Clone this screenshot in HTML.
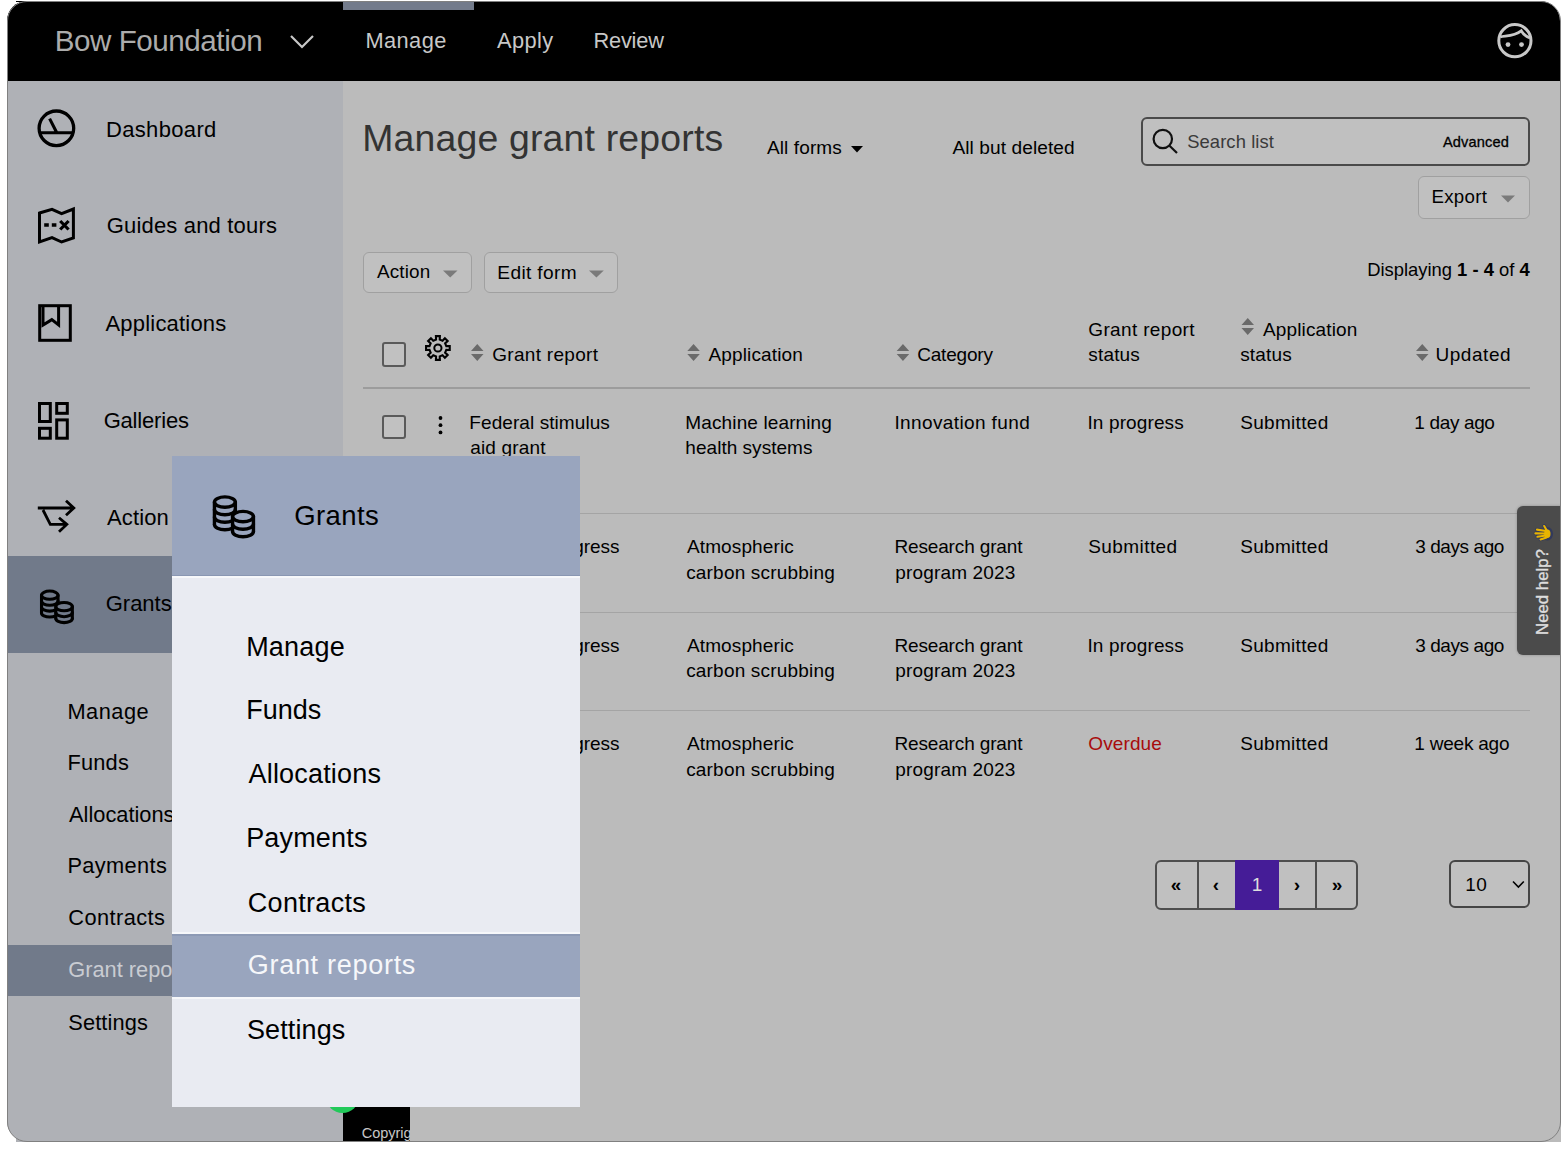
<!DOCTYPE html>
<html><head><meta charset="utf-8">
<style>
html,body{margin:0;padding:0;width:1564px;height:1149px;overflow:hidden;background:#fff;}
body{font-family:"Liberation Sans", sans-serif;position:relative;}
.t{position:absolute;white-space:nowrap;line-height:1;}
.r{position:absolute;}
#clip{position:absolute;left:0;top:0;width:1564px;height:1149px;clip-path:inset(1px 4px 8px 7px round 20px);background:#bbbbbb;}
svg{position:absolute;overflow:visible;}
</style></head><body>
<div id="clip">
<div class="r" style="left:0px;top:0px;width:1564px;height:81px;background:#000;"></div>
<div class="r" style="left:343px;top:2px;width:131px;height:8px;background:#737b8b;"></div>
<div class="t" style="left:54.76px;top:25.84px;font-size:29.6px;color:#acacac;letter-spacing:-0.454px;">Bow Foundation</div>
<svg style="left:0;top:0" width="1564" height="80"><path d="M291,36 L302,47 L313,36" fill="none" stroke="#c8c8c8" stroke-width="2.2"/><circle cx="1514.9" cy="40.7" r="16.1" fill="none" stroke="#c8c8c8" stroke-width="3"/><path d="M1500.2,36.8 C1506,35.5 1514,36.5 1521.2,30.8 C1523,34 1526,36.5 1530,38" fill="none" stroke="#c8c8c8" stroke-width="2.8"/><circle cx="1508" cy="44.6" r="2.4" fill="#c8c8c8"/><circle cx="1521.5" cy="44.6" r="2.4" fill="#c8c8c8"/></svg>
<div class="t" style="left:365.44px;top:29.95px;font-size:21.8px;color:#c8c8c8;letter-spacing:0.427px;">Manage</div>
<div class="t" style="left:497.00px;top:29.95px;font-size:21.8px;color:#c8c8c8;letter-spacing:0.375px;">Apply</div>
<div class="t" style="left:593.40px;top:29.95px;font-size:21.8px;color:#c8c8c8;letter-spacing:-0.181px;">Review</div>
<div class="r" style="left:0px;top:81px;width:343px;height:1068px;background:#afb1b6;"></div>
<div class="r" style="left:0px;top:556px;width:343px;height:97px;background:#717a8a;"></div>
<div class="r" style="left:0px;top:944.5px;width:343px;height:51.10000000000002px;background:#717a8a;"></div>
<div class="t" style="left:105.94px;top:118.78px;font-size:22px;color:#000;letter-spacing:0.347px;">Dashboard</div>
<div class="t" style="left:106.74px;top:215.08px;font-size:22px;color:#000;letter-spacing:0.174px;">Guides and tours</div>
<div class="t" style="left:105.50px;top:313.08px;font-size:22px;color:#000;letter-spacing:0.198px;">Applications</div>
<div class="t" style="left:103.66px;top:410.18px;font-size:22px;color:#000;letter-spacing:-0.191px;">Galleries</div>
<div class="t" style="left:107.00px;top:507.28px;font-size:22px;color:#000;letter-spacing:0.128px;">Action</div>
<div class="t" style="left:105.70px;top:593.08px;font-size:22px;color:#000;">Grants</div>
<div class="t" style="left:67.48px;top:700.75px;font-size:21.8px;color:#000;letter-spacing:0.495px;">Manage</div>
<div class="t" style="left:67.48px;top:752.45px;font-size:21.8px;color:#000;letter-spacing:0.199px;">Funds</div>
<div class="t" style="left:69.08px;top:804.15px;font-size:21.8px;color:#000;">Allocations</div>
<div class="t" style="left:67.48px;top:854.95px;font-size:21.8px;color:#000;letter-spacing:0.346px;">Payments</div>
<div class="t" style="left:68.28px;top:906.55px;font-size:21.8px;color:#000;letter-spacing:0.412px;">Contracts</div>
<div class="t" style="left:68.28px;top:959.35px;font-size:21.8px;color:#c9ccd2;">Grant reports</div>
<div class="t" style="left:68.28px;top:1011.55px;font-size:21.8px;color:#000;letter-spacing:0.125px;">Settings</div>
<svg style="left:0;top:0" width="343" height="700" fill="none" stroke="#000" stroke-width="3"><circle cx="56.4" cy="128.3" r="17.3" stroke-width="3.3"/><path d="M39.5,132.7 H73.3 M49.6,118.6 L56.8,132.7" stroke-width="3.1"/><path d="M39.5,213 L52,209.3 L61.6,213.6 L73.4,209 V238 L61.6,242 L52,237.6 L39.5,241.8 Z" stroke-linejoin="miter" stroke-width="3"/><path d="M44.2,225 H48.8 M51.8,225 H56.4" stroke-width="3.4"/><path d="M60.2,221 L68.6,229.5 M68.6,221 L60.2,229.5" stroke-width="3.2"/><rect x="39.7" y="305.7" width="30.6" height="34.6"/><path d="M43,307 V325 L51.8,319.6 L58.6,325 V307" stroke-width="3"/><rect x="39.5" y="403.5" width="10.8" height="18" /><rect x="56.7" y="403.5" width="10.6" height="9.8" /><rect x="39.5" y="428.3" width="10.8" height="9.9" /><rect x="56.7" y="419.9" width="10.6" height="18.3" /><path d="M37.8,508 H73 M66,500.7 L73.8,508 L66,515.3 M43,510 L50.3,524.4 H66.5 M59,517.8 L66.8,524.4 L59,531.8" stroke-width="2.8"/></svg>
<svg style="left:37.87px;top:587.76px" width="48" height="48"><g transform="scale(0.79)" fill="none" stroke="#000" stroke-width="3.9" stroke-linecap="round"><path d="M4.45,9.10 V31.60 A10.45,5.2 0 0 0 25.35,31.60 V9.10 Z" fill="#717a8a" stroke="none"/><ellipse cx="14.90" cy="9.10" rx="10.45" ry="5.2" fill="#717a8a"/><path d="M4.45,9.10 V31.60 M25.35,9.10 V31.60"/><path d="M4.45,16.60 A10.45,5.2 0 0 0 25.35,16.60"/><path d="M4.45,24.10 A10.45,5.2 0 0 0 25.35,24.10"/><path d="M4.45,31.60 A10.45,5.2 0 0 0 25.35,31.60"/><path d="M22.55,23.60 V38.60 A10.45,5.2 0 0 0 43.45,38.60 V23.60 Z" fill="#717a8a" stroke="none"/><ellipse cx="33.00" cy="23.60" rx="10.45" ry="5.2" fill="#717a8a"/><path d="M22.55,23.60 V38.60 M43.45,23.60 V38.60"/><path d="M22.55,31.10 A10.45,5.2 0 0 0 43.45,31.10"/><path d="M22.55,38.60 A10.45,5.2 0 0 0 43.45,38.60"/></g></svg>
<div class="t" style="left:362.14px;top:120.14px;font-size:37.4px;color:#333;letter-spacing:0.188px;">Manage grant reports</div>
<div class="t" style="left:767.00px;top:138.42px;font-size:19px;color:#000;letter-spacing:0.111px;">All forms</div>
<svg style="left:0;top:0" width="1564" height="300"><path d="M851,146 H863 L857,152.5 Z" fill="#000"/></svg>
<div class="t" style="left:952.46px;top:138.33px;font-size:19.1px;color:#000;letter-spacing:0.083px;">All but deleted</div>
<div class="r" style="box-sizing:border-box;left:1141px;top:117px;width:389px;height:49px;border:2px solid #4a4a4a;border-radius:6px;background:#c0c0c0;"></div>
<svg style="left:0;top:0" width="1564" height="300" fill="none" stroke="#111" stroke-width="2.2"><circle cx="1162.8" cy="139" r="9.2"/><path d="M1169.5,145.7 L1177,153"/></svg>
<div class="t" style="left:1187.16px;top:133.22px;font-size:18.4px;color:#3a3a3a;letter-spacing:0.091px;">Search list</div>
<div class="t" style="left:1443.00px;top:135.14px;font-size:14.6px;color:#000;letter-spacing:0.119px;-webkit-text-stroke:0.3px #000;">Advanced</div>
<div class="r" style="box-sizing:border-box;left:1418px;top:176px;width:112px;height:42.5px;border:1px solid #a0a0a0;border-radius:6px;background:#c0c0c0;"></div>
<div class="t" style="left:1431.40px;top:187.87px;font-size:18.7px;color:#000;letter-spacing:0.311px;">Export</div>
<div class="r" style="box-sizing:border-box;left:363px;top:251.6px;width:109px;height:41.8px;border:1px solid #a0a0a0;border-radius:6px;background:#c0c0c0;"></div>
<div class="r" style="box-sizing:border-box;left:484.3px;top:251.6px;width:134px;height:41.8px;border:1px solid #a0a0a0;border-radius:6px;background:#c0c0c0;"></div>
<svg style="left:0;top:0" width="1564" height="300"><path d="M1501,195.5 H1515 L1508,202.6 Z" fill="#7a7a7a"/><path d="M443,270.5 H457.5 L450.2,277.6 Z" fill="#7a7a7a"/><path d="M589,270.5 H603.8 L596.4,277.6 Z" fill="#7a7a7a"/></svg>
<div class="t" style="left:376.96px;top:263.00px;font-size:18.9px;color:#000;letter-spacing:0.152px;">Action</div>
<div class="t" style="left:497.36px;top:262.83px;font-size:19.1px;color:#000;letter-spacing:0.360px;">Edit form</div>
<div class="t" style="right:34.30px;top:260.92px;font-size:18.4px;color:#000;">Displaying <b>1 - 4</b> of <b>4</b></div>
<svg style="left:0;top:0" width="1564" height="1149"><path d="M471,351 L477.25,344 L483.5,351 Z M471,354 L477.25,361 L483.5,354 Z" fill="#6a6a6a"/><path d="M687.3,351 L693.55,344 L699.8,351 Z M687.3,354 L693.55,361 L699.8,354 Z" fill="#6a6a6a"/><path d="M896.7,351 L902.95,344 L909.2,351 Z M896.7,354 L902.95,361 L909.2,354 Z" fill="#6a6a6a"/><path d="M1241.5,325 L1247.75,318 L1254.0,325 Z M1241.5,328 L1247.75,335 L1254.0,328 Z" fill="#6a6a6a"/><path d="M1416,351 L1422.25,344 L1428.5,351 Z M1416,354 L1422.25,361 L1428.5,354 Z" fill="#6a6a6a"/><path d="M436.06,339.60 L435.93,336.16 L439.87,336.16 L439.74,339.60 L442.54,340.76 L444.88,338.24 L447.66,341.02 L445.14,343.36 L446.30,346.16 L449.74,346.03 L449.74,349.97 L446.30,349.84 L445.14,352.64 L447.66,354.98 L444.88,357.76 L442.54,355.24 L439.74,356.40 L439.87,359.84 L435.93,359.84 L436.06,356.40 L433.26,355.24 L430.92,357.76 L428.14,354.98 L430.66,352.64 L429.50,349.84 L426.06,349.97 L426.06,346.03 L429.50,346.16 L430.66,343.36 L428.14,341.02 L430.92,338.24 L433.26,340.76Z" fill="none" stroke="#000" stroke-width="2.1" stroke-linejoin="miter"/><circle cx="437.9" cy="348" r="3.6" fill="none" stroke="#000" stroke-width="2"/><circle cx="440.5" cy="418" r="1.9" fill="#000"/><circle cx="440.5" cy="425.2" r="1.9" fill="#000"/><circle cx="440.5" cy="432.4" r="1.9" fill="#000"/></svg>
<div class="r" style="box-sizing:border-box;left:382px;top:342px;width:24px;height:24.5px;border:2px solid #5a5a5a;border-radius:3px;background:#c1c1c1"></div>
<div class="r" style="box-sizing:border-box;left:382px;top:415px;width:24px;height:24px;border:2px solid #5a5a5a;border-radius:3px;background:#c1c1c1"></div>
<div class="t" style="left:492.16px;top:345.22px;font-size:19px;color:#000;letter-spacing:0.312px;">Grant report</div>
<div class="t" style="left:708.54px;top:344.92px;font-size:19px;color:#000;letter-spacing:0.139px;">Application</div>
<div class="t" style="left:917.24px;top:344.92px;font-size:19px;color:#000;letter-spacing:-0.203px;">Category</div>
<div class="t" style="left:1088.28px;top:319.82px;font-size:19px;color:#000;letter-spacing:0.350px;">Grant report</div>
<div class="t" style="left:1088.28px;top:345.42px;font-size:19px;color:#000;letter-spacing:0.174px;">status</div>
<div class="t" style="left:1263.00px;top:319.82px;font-size:19px;color:#000;letter-spacing:0.139px;">Application</div>
<div class="t" style="left:1240.20px;top:345.42px;font-size:19px;color:#000;letter-spacing:0.174px;">status</div>
<div class="t" style="left:1435.40px;top:345.42px;font-size:19px;color:#000;letter-spacing:0.577px;">Updated</div>
<div class="r" style="left:363px;top:387px;width:1167px;height:2px;background:#9c9c9c;"></div>
<div class="r" style="left:363px;top:513px;width:1167px;height:1px;background:#a4a4a4;"></div>
<div class="r" style="left:363px;top:612px;width:1167px;height:1px;background:#a4a4a4;"></div>
<div class="r" style="left:363px;top:710px;width:1167px;height:1px;background:#a4a4a4;"></div>
<div class="t" style="left:469.36px;top:412.92px;font-size:19px;color:#000;letter-spacing:0.072px;">Federal stimulus</div>
<div class="t" style="left:470.16px;top:438.42px;font-size:19px;color:#000;letter-spacing:0.174px;">aid grant</div>
<div class="t" style="left:685.36px;top:412.92px;font-size:19px;color:#000;letter-spacing:0.120px;">Machine learning</div>
<div class="t" style="left:685.36px;top:438.42px;font-size:19px;color:#000;letter-spacing:0.025px;">health systems</div>
<div class="t" style="left:894.40px;top:412.92px;font-size:19px;color:#000;letter-spacing:0.386px;">Innovation fund</div>
<div class="t" style="left:1087.48px;top:412.92px;font-size:19px;color:#000;letter-spacing:0.122px;">In progress</div>
<div class="t" style="left:1240.20px;top:412.92px;font-size:19px;color:#000;letter-spacing:0.313px;">Submitted</div>
<div class="t" style="left:1414.36px;top:412.92px;font-size:19px;color:#000;letter-spacing:-0.363px;">1 day ago</div>
<div class="t" style="right:944.40px;top:537.22px;font-size:19px;color:#000;">Quarterly progress</div>
<div class="t" style="left:686.96px;top:537.22px;font-size:19px;color:#000;letter-spacing:0.124px;">Atmospheric</div>
<div class="t" style="left:686.16px;top:562.72px;font-size:19px;color:#000;letter-spacing:0.191px;">carbon scrubbing</div>
<div class="t" style="left:894.40px;top:537.22px;font-size:19px;color:#000;letter-spacing:-0.139px;">Research grant</div>
<div class="t" style="left:895.20px;top:562.72px;font-size:19px;color:#000;letter-spacing:0.173px;">program 2023</div>
<div class="t" style="left:1088.28px;top:537.22px;font-size:19px;color:#000;letter-spacing:0.413px;">Submitted</div>
<div class="t" style="left:1240.20px;top:537.22px;font-size:19px;color:#000;letter-spacing:0.313px;">Submitted</div>
<div class="t" style="left:1415.16px;top:537.22px;font-size:19px;color:#000;letter-spacing:-0.412px;">3 days ago</div>
<div class="t" style="right:944.40px;top:635.52px;font-size:19px;color:#000;">Quarterly progress</div>
<div class="t" style="left:686.96px;top:635.52px;font-size:19px;color:#000;letter-spacing:0.124px;">Atmospheric</div>
<div class="t" style="left:686.16px;top:661.02px;font-size:19px;color:#000;letter-spacing:0.191px;">carbon scrubbing</div>
<div class="t" style="left:894.40px;top:635.52px;font-size:19px;color:#000;letter-spacing:-0.139px;">Research grant</div>
<div class="t" style="left:895.20px;top:661.02px;font-size:19px;color:#000;letter-spacing:0.173px;">program 2023</div>
<div class="t" style="left:1087.48px;top:635.52px;font-size:19px;color:#000;letter-spacing:0.122px;">In progress</div>
<div class="t" style="left:1240.20px;top:635.52px;font-size:19px;color:#000;letter-spacing:0.313px;">Submitted</div>
<div class="t" style="left:1415.16px;top:635.52px;font-size:19px;color:#000;letter-spacing:-0.412px;">3 days ago</div>
<div class="t" style="right:944.40px;top:734.22px;font-size:19px;color:#000;">Quarterly progress</div>
<div class="t" style="left:686.96px;top:734.22px;font-size:19px;color:#000;letter-spacing:0.124px;">Atmospheric</div>
<div class="t" style="left:686.16px;top:759.72px;font-size:19px;color:#000;letter-spacing:0.191px;">carbon scrubbing</div>
<div class="t" style="left:894.40px;top:734.22px;font-size:19px;color:#000;letter-spacing:-0.139px;">Research grant</div>
<div class="t" style="left:895.20px;top:759.72px;font-size:19px;color:#000;letter-spacing:0.173px;">program 2023</div>
<div class="t" style="left:1088.28px;top:734.22px;font-size:19px;color:#a80c0c;letter-spacing:0.122px;">Overdue</div>
<div class="t" style="left:1240.20px;top:734.22px;font-size:19px;color:#000;letter-spacing:0.313px;">Submitted</div>
<div class="t" style="left:1414.36px;top:734.22px;font-size:19px;color:#000;letter-spacing:-0.232px;">1 week ago</div>
<div class="r" style="box-sizing:border-box;left:1155px;top:860px;width:203px;height:49.5px;border:2px solid #4e4e4e;border-radius:6px;background:#c0c0c0;"></div>
<div class="r" style="left:1235px;top:860px;width:44px;height:49.5px;background:#451c97;"></div>
<div class="r" style="left:1197px;top:861px;width:1.5px;height:47.5px;background:#4e4e4e;"></div>
<div class="r" style="left:1315px;top:861px;width:1.5px;height:47.5px;background:#4e4e4e;"></div>
<div style="position:absolute;top:870px;text-align:center;font-size:19px;line-height:30px;white-space:nowrap;left:1155px;width:42px;color:#000;font-weight:bold">&laquo;</div>
<div style="position:absolute;top:870px;text-align:center;font-size:19px;line-height:30px;white-space:nowrap;left:1197px;width:38px;color:#000;font-weight:bold">&lsaquo;</div>
<div style="position:absolute;top:870px;text-align:center;font-size:19px;line-height:30px;white-space:nowrap;left:1235px;width:44px;color:#ddd">1</div>
<div style="position:absolute;top:870px;text-align:center;font-size:19px;line-height:30px;white-space:nowrap;left:1278px;width:38px;color:#000;font-weight:bold">&rsaquo;</div>
<div style="position:absolute;top:870px;text-align:center;font-size:19px;line-height:30px;white-space:nowrap;left:1316px;width:42px;color:#000;font-weight:bold">&raquo;</div>
<div class="r" style="box-sizing:border-box;left:1449px;top:860px;width:81px;height:48px;border:2px solid #454545;border-radius:6px;background:#c0c0c0;"></div>
<div class="t" style="left:1465.36px;top:875.22px;font-size:19px;color:#000;letter-spacing:0.350px;">10</div>
<svg style="left:0;top:0" width="1564" height="1149"><path d="M1513,881.5 L1518.4,887 L1523.8,881.5" fill="none" stroke="#000" stroke-width="1.6"/></svg>
<div class="r" style="left:1517px;top:506px;width:60px;height:149px;background:#4b4b4b;border-radius:6px;box-shadow:0 0 3px rgba(0,0,0,0.25)"></div>
<div class="t" style="left:1543px;top:592px;font-size:16.8px;line-height:1;color:#ddd;-webkit-text-stroke:0.35px #ddd;transform:translate(-50%,-50%) rotate(-90deg);">Need help?</div>
<svg style="left:0;top:0" width="1564" height="1149"><g stroke-linecap="round" fill="none"><g stroke="#1d2c6b" stroke-width="3.6" opacity="0.55"><path d="M1546,531 L1537,529.6 M1546,533.5 L1535.4,533.4 M1546,535.5 L1537.4,536.8 M1546.5,537.5 L1540.5,539.4 M1546.8,530.5 L1544.2,526"/><ellipse cx="1547.3" cy="533.8" rx="4" ry="5" fill="#1d2c6b"/></g><g stroke="#e8b400" stroke-width="2.1"><path d="M1546,531 L1537,529.6 M1546,533.5 L1535.4,533.4 M1546,535.5 L1537.4,536.8 M1546.5,537.5 L1540.5,539.4 M1546.8,530.5 L1544.2,526"/><ellipse cx="1547.3" cy="533.8" rx="3.2" ry="4.3" fill="#e8b400" stroke="none"/></g></g></svg>
<div class="r" style="left:343px;top:1107px;width:67px;height:42px;background:#000;"></div>
<div class="t" style="left:361.70px;top:1126.33px;font-size:14.5px;color:#c8c8c8;">Copyright</div>
<div class="r" style="left:410px;top:1107px;width:1154px;height:42px;background:#bbbbbb;"></div>
<div class="r" style="left:325.75px;top:1079.9px;width:33.1px;height:33.1px;border-radius:50%;background:#22c95a"></div>
<div class="r" style="left:172px;top:456px;width:408px;height:119px;background:#99a5be;"></div>
<div class="r" style="left:172px;top:575px;width:408px;height:1px;background:#8996b2;"></div>
<div class="r" style="left:172px;top:576px;width:408px;height:2px;background:#f6f7fa;"></div>
<div class="r" style="left:172px;top:578px;width:408px;height:529px;background:#e9ebf2;"></div>
<div class="r" style="left:172px;top:931.8px;width:408px;height:2.2000000000000455px;background:#f6f7fa;"></div>
<div class="r" style="left:172px;top:934px;width:408px;height:62.799999999999955px;background:#99a5be;"></div>
<div class="r" style="left:172px;top:934px;width:408px;height:1.5px;background:#8d9ab5;"></div>
<div class="r" style="left:172px;top:996.8px;width:408px;height:1.8000000000000682px;background:#f6f7fa;"></div>
<div class="t" style="left:294.20px;top:501.52px;font-size:27.5px;color:#000;letter-spacing:0.404px;">Grants</div>
<svg style="left:210px;top:493px" width="48" height="48" fill="none" stroke="#000" stroke-width="3.4" stroke-linecap="round"><path d="M4.45,9.10 V31.60 A10.45,5.2 0 0 0 25.35,31.60 V9.10 Z" fill="#99a5be" stroke="none"/><ellipse cx="14.90" cy="9.10" rx="10.45" ry="5.2" fill="#99a5be"/><path d="M4.45,9.10 V31.60 M25.35,9.10 V31.60"/><path d="M4.45,16.60 A10.45,5.2 0 0 0 25.35,16.60"/><path d="M4.45,24.10 A10.45,5.2 0 0 0 25.35,24.10"/><path d="M4.45,31.60 A10.45,5.2 0 0 0 25.35,31.60"/><path d="M22.55,23.60 V38.60 A10.45,5.2 0 0 0 43.45,38.60 V23.60 Z" fill="#99a5be" stroke="none"/><ellipse cx="33.00" cy="23.60" rx="10.45" ry="5.2" fill="#99a5be"/><path d="M22.55,23.60 V38.60 M43.45,23.60 V38.60"/><path d="M22.55,31.10 A10.45,5.2 0 0 0 43.45,31.10"/><path d="M22.55,38.60 A10.45,5.2 0 0 0 43.45,38.60"/></svg>
<div class="t" style="left:246.14px;top:633.54px;font-size:27px;color:#000;letter-spacing:0.219px;">Manage</div>
<div class="t" style="left:246.14px;top:697.24px;font-size:27px;color:#000;letter-spacing:0.045px;">Funds</div>
<div class="t" style="left:248.54px;top:760.84px;font-size:27px;color:#000;letter-spacing:0.180px;">Allocations</div>
<div class="t" style="left:246.14px;top:825.24px;font-size:27px;color:#000;letter-spacing:0.181px;">Payments</div>
<div class="t" style="left:247.74px;top:889.64px;font-size:27px;color:#000;letter-spacing:0.317px;">Contracts</div>
<div class="t" style="left:247.74px;top:952.14px;font-size:27px;color:#f6f7fa;letter-spacing:0.714px;">Grant reports</div>
<div class="t" style="left:246.94px;top:1017.44px;font-size:27px;color:#000;letter-spacing:0.114px;">Settings</div>
</div>
<div class="r" style="left:16px;top:1px;width:16px;height:1.4px;background:#000;"></div>
<div class="r" style="left:16px;top:1134px;width:14px;height:7.7999999999999545px;background:#afb1b6;"></div>
<div class="r" style="left:1538px;top:1122px;width:22.5px;height:19.799999999999955px;background:#bbbbbb;"></div>
<div class="r" style="left:6.5px;top:0.5px;width:1552px;height:1139.5px;border:1px solid #808080;border-radius:20px;"></div>
</body></html>
